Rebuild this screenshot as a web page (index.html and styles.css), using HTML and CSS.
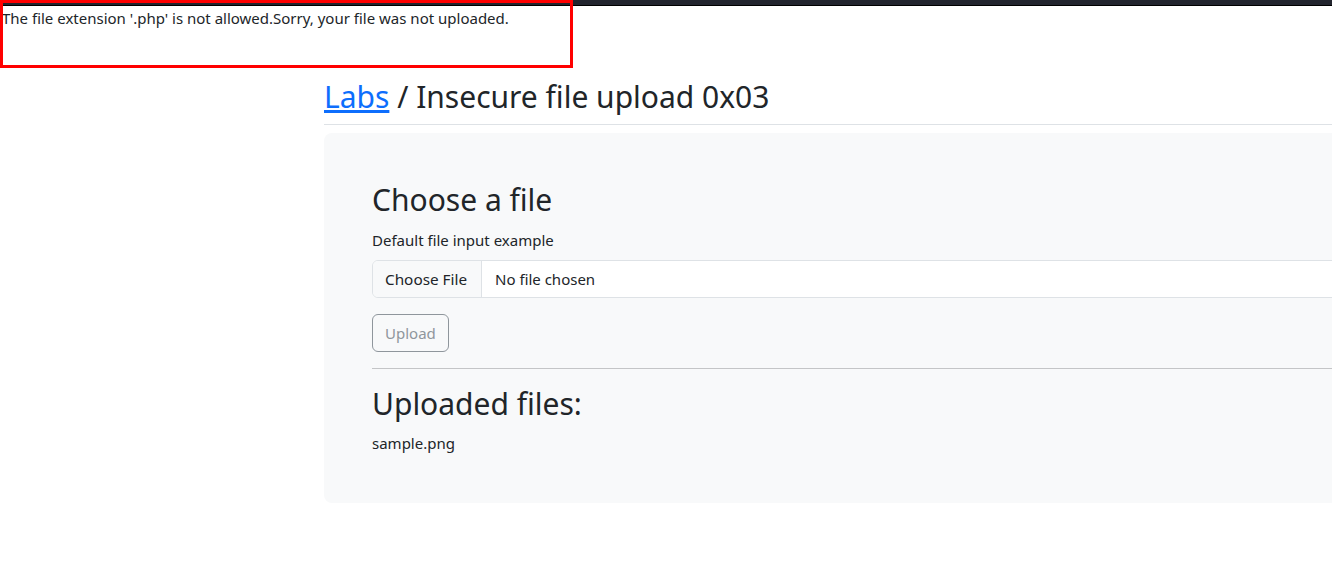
FILE: index.html
```html
<!DOCTYPE html>
<html lang="en">
<head>
<meta charset="utf-8">
<title>Insecure file upload 0x03</title>
<link rel="stylesheet" href="styles.css">
</head>
<body>
<div class="topbar"></div>
<div class="message">The file extension '.php' is not allowed.Sorry, your file was not uploaded.</div>
<div class="annotation"></div>
<main class="main">
  <div class="page-header">
    <h2 class="title"><a href="#" class="crumb">Labs</a> / Insecure file upload 0x03</h2>
  </div>
  <section class="panel">
    <h2 class="section-title">Choose a file</h2>
    <form class="upload-form">
      <label class="form-label" for="formFile">Default file input example</label>
      <input class="file-input" type="file" id="formFile">
      <div class="actions">
        <button type="button" class="btn-upload" disabled>Upload</button>
      </div>
    </form>
    <hr class="divider">
    <h2 class="section-title">Uploaded files:</h2>
    <div class="file-item">sample.png</div>
  </section>
</main>
</body>
</html>
```
FILE: styles.css
```css
html, body {
  margin: 0;
  padding: 0;
  overflow: hidden;
  background: #fff;
}
body {
  font-family: "Noto Sans", "Open Sans", sans-serif;
  font-size: 15px;
  line-height: 24px;
  color: #212529;
}
.topbar {
  height: 5px;
  background: #22252e;
  border-bottom: 1px solid #000;
}
.message {
  padding-left: 2px;
  height: 24px;
  margin-top: 0;
}
.annotation {
  position: absolute;
  left: 0;
  top: 0;
  width: 567px;
  height: 62px;
  border: 3px solid #ff0000;
  pointer-events: none;
}
.main {
  margin-left: 324px;
  width: 1140px;
  margin-top: 48px;
}
.page-header {
  border-bottom: 1px solid #dee2e6;
  margin-bottom: 8px;
}
h2 {
  font-size: 30px;
  font-weight: 400;
  line-height: 38.4px;
  margin: 0 0 8px 0;
}
.crumb {
  color: #0d6efd;
  text-decoration: underline;
  text-underline-offset: 2px;
}
.panel {
  background: #f8f9fa;
  border-radius: 8px;
  padding: 48px;
}
.upload-form {
  display: flex;
  flex-direction: column;
}
.form-label {
  display: block;
  margin-bottom: 8px;
}
.file-input {
  display: block;
  box-sizing: border-box;
  width: 100%;
  height: 38px;
  padding: 6px 12px;
  font-family: inherit;
  font-size: 15px;
  line-height: 24px;
  color: #212529;
  background: #fff;
  border: 1px solid #dee2e6;
  border-radius: 6px;
  overflow: hidden;
}
.file-input::file-selector-button {
  padding: 6px 14px 6px 12px;
  margin: -6px 13px -6px -12px;
  height: 36px;
  font-family: inherit;
  font-size: 15.3px;
  color: #212529;
  background: #f8f9fa;
  border: 0 solid #dee2e6;
  border-right-width: 1px;
  border-radius: 0;
}
.actions {
  margin-top: 16px;
}
.btn-upload {
  font-family: inherit;
  font-size: 15px;
  line-height: 24px;
  padding: 6px 12px;
  color: #6c757d;
  background: transparent;
  border: 1px solid #6c757d;
  border-radius: 6px;
  opacity: 0.75;
}
.divider {
  margin: 16px 0;
  border: 0;
  border-top: 1px solid #c4c5c7;
}
.file-item {
  line-height: 24px;
}
```
